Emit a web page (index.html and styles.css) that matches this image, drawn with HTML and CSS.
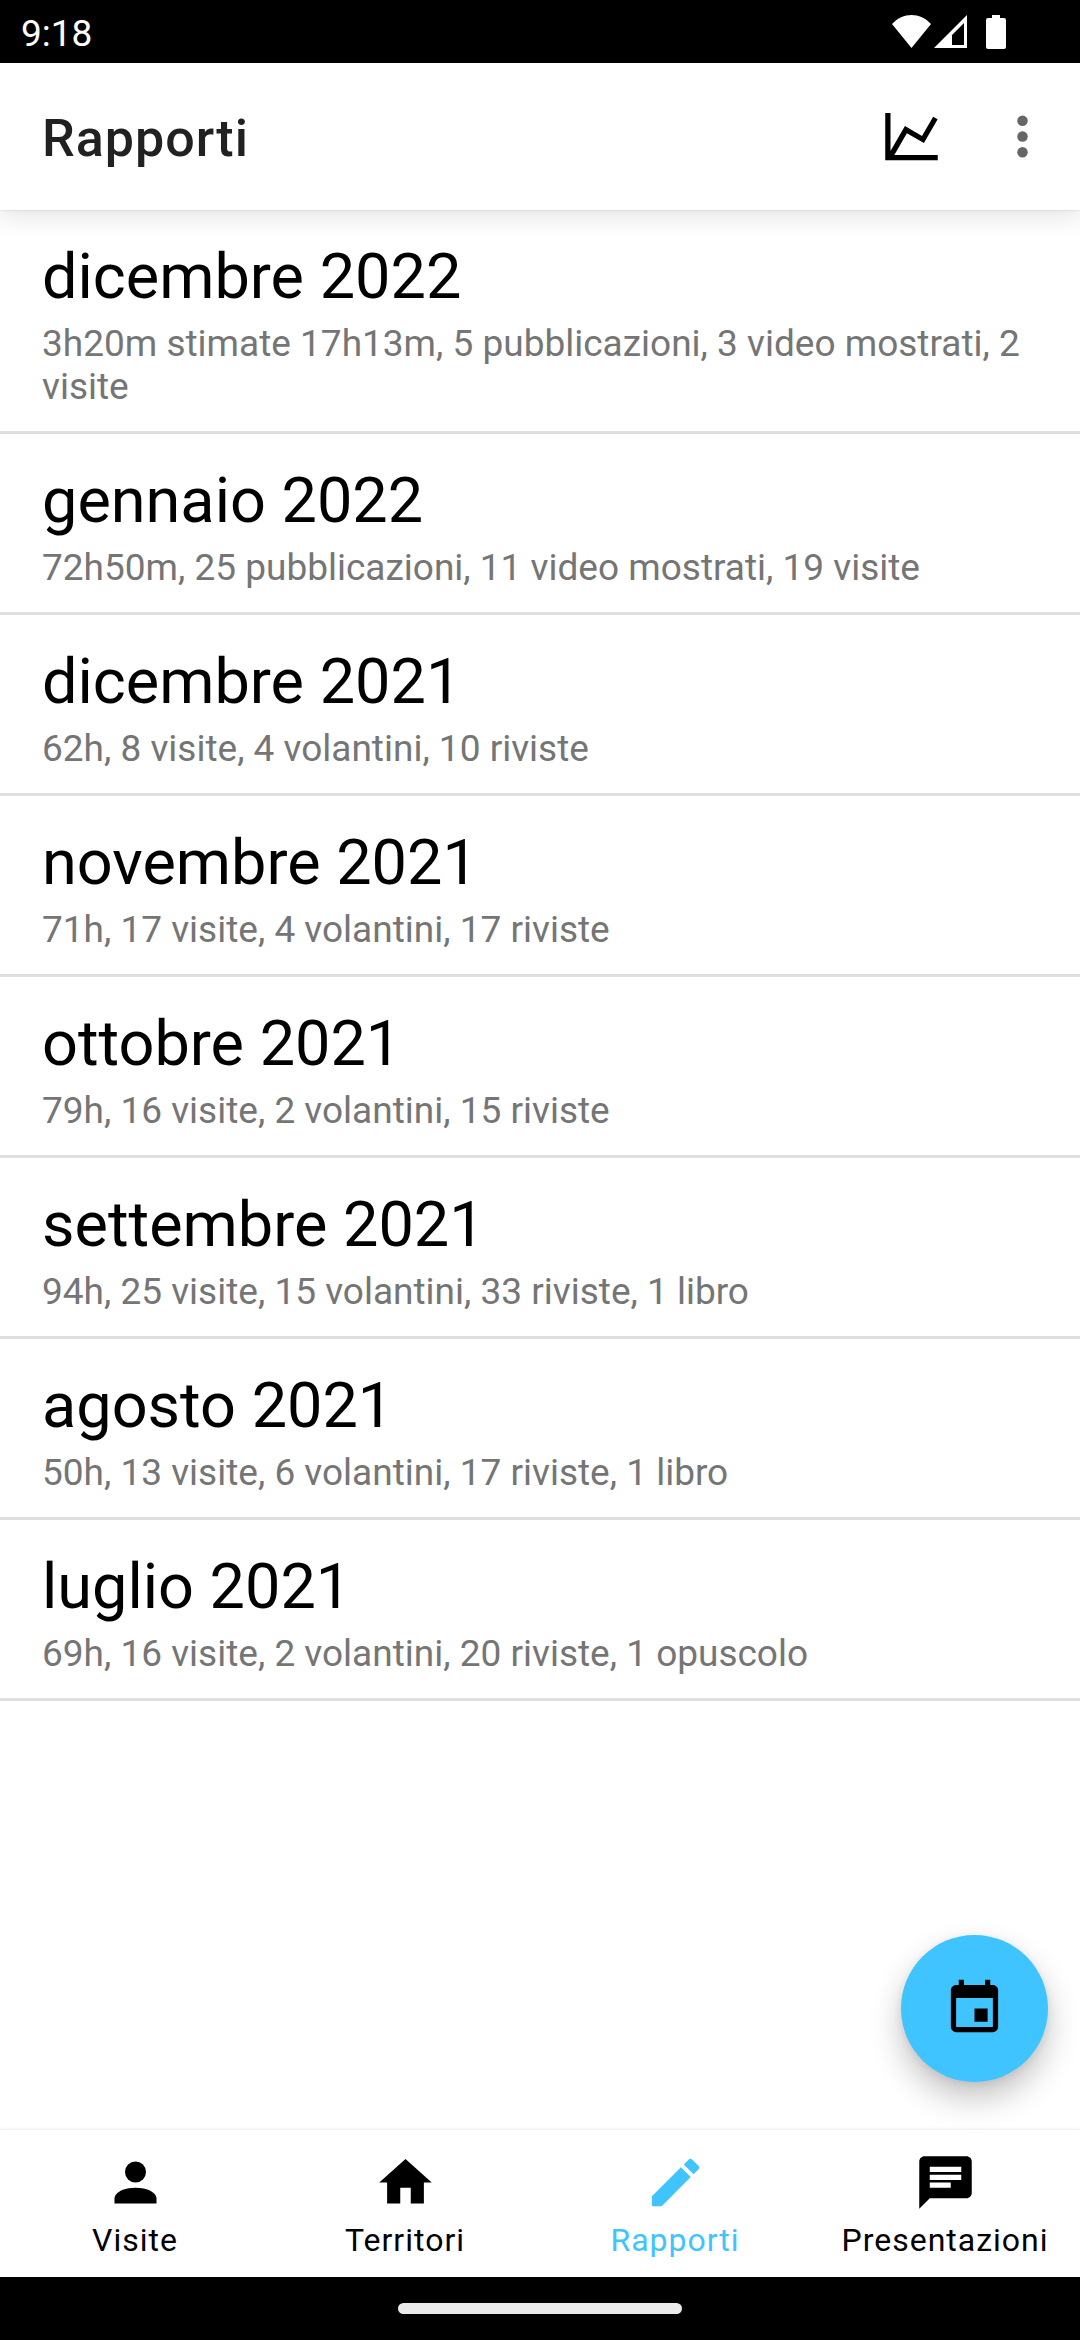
FILE: index.html
```html
<!DOCTYPE html>
<html lang="it">
<head>
<meta charset="utf-8">
<meta name="viewport" content="width=device-width, initial-scale=1">
<title>Rapporti</title>
<link rel="stylesheet" href="styles.css">
</head>
<body class="app">
  <div class="status-bar">
    <span class="status-time">9:18</span>
    <div class="status-icons">
      <svg class="status-wifi" viewBox="0 0 39 33" aria-hidden="true"><path d="M0 9C11-3 28-3 39 9L19.500 33Z"/></svg>
      <svg class="status-signal" viewBox="0 0 33 33" aria-hidden="true"><path fill-rule="evenodd" d="M33 0V33H0ZM30 8L18 20V30H30Z"/></svg>
      <svg class="status-battery" viewBox="0 0 20 34" aria-hidden="true"><path d="M6 0H14V3H18Q20 3 20 5V32Q20 34 18 34H2Q0 34 0 32V5Q0 3 2 3H6Z"/></svg>
    </div>
  </div>

  <header class="toolbar">
    <h1 class="toolbar-title">Rapporti</h1>
    <button class="icon-button" type="button" aria-label="Statistiche">
      <svg class="icon" viewBox="0 0 24 24" aria-hidden="true"><path d="M16 11.780L20.240 4.450L21.970 5.450L16.740 14.500L10.230 10.750L5.460 19H22V21H2V3H4V17.540L9.500 8Z"/></svg>
    </button>
    <button class="icon-button icon-button-muted" type="button" aria-label="Altre opzioni">
      <svg class="icon" viewBox="0 0 24 24" aria-hidden="true"><circle cx="12" cy="6" r="2"/><circle cx="12" cy="12" r="2"/><circle cx="12" cy="18" r="2"/></svg>
    </button>
  </header>

  <main class="content">
    <ul class="reports">
      <li class="report"><h2 class="report-month">dicembre 2022</h2><p class="report-summary">3h20m stimate 17h13m, 5 pubblicazioni, 3 video mostrati, 2 visite</p></li>
      <li class="report"><h2 class="report-month">gennaio 2022</h2><p class="report-summary">72h50m, 25 pubblicazioni, 11 video mostrati, 19 visite</p></li>
      <li class="report"><h2 class="report-month">dicembre 2021</h2><p class="report-summary">62h, 8 visite, 4 volantini, 10 riviste</p></li>
      <li class="report"><h2 class="report-month">novembre 2021</h2><p class="report-summary">71h, 17 visite, 4 volantini, 17 riviste</p></li>
      <li class="report"><h2 class="report-month">ottobre 2021</h2><p class="report-summary">79h, 16 visite, 2 volantini, 15 riviste</p></li>
      <li class="report"><h2 class="report-month">settembre 2021</h2><p class="report-summary">94h, 25 visite, 15 volantini, 33 riviste, 1 libro</p></li>
      <li class="report"><h2 class="report-month">agosto 2021</h2><p class="report-summary">50h, 13 visite, 6 volantini, 17 riviste, 1 libro</p></li>
      <li class="report"><h2 class="report-month">luglio 2021</h2><p class="report-summary">69h, 16 visite, 2 volantini, 20 riviste, 1 opuscolo</p></li>
    </ul>
    <button class="fab" type="button" aria-label="Aggiungi rapporto">
      <svg class="icon" viewBox="0 0 24 24" aria-hidden="true"><path d="M19 19H5V8H19M16 1V3H8V1H6V3H5C3.890 3 3 3.890 3 5V19A2 2 0 0 0 5 21H19A2 2 0 0 0 21 19V5C21 3.890 20.100 3 19 3H18V1M17 12H12V17H17V12Z"/></svg>
    </button>
  </main>

  <nav class="tabs">
    <a class="tab" href="#visite">
      <svg class="icon" viewBox="0 0 24 24" aria-hidden="true"><circle cx="12" cy="8" r="4"/><path d="M12 14C16.420 14 20 15.790 20 18V20H4V18C4 15.790 7.580 14 12 14Z"/></svg>
      <span>Visite</span>
    </a>
    <a class="tab" href="#territori">
      <svg class="icon" viewBox="0 0 24 24" aria-hidden="true"><path d="M10 20v-6h4v6h5v-8h3L12 3 2 12h3v8z"/></svg>
      <span>Territori</span>
    </a>
    <a class="tab tab-active" href="#rapporti" aria-current="page">
      <svg class="icon" viewBox="0 0 24 24" aria-hidden="true"><path d="M3 17.250V21h3.750L17.810 9.940l-3.750-3.750L3 17.250zM20.710 7.040c.39-.39.39-1.020 0-1.410l-2.340-2.340c-.39-.39-1.020-.39-1.410 0l-1.830 1.830 3.750 3.750 1.830-1.830z"/></svg>
      <span>Rapporti</span>
    </a>
    <a class="tab" href="#presentazioni">
      <svg class="icon" viewBox="0 0 24 24" aria-hidden="true"><path d="M20 2H4c-1.100 0-1.990.9-1.990 2L2 22l4-4h14c1.100 0 2-.9 2-2V4c0-1.100-.9-2-2-2zM6 9h12v2H6V9zm8 5H6v-2h8v2zm4-6H6V6h12v2z"/></svg>
      <span>Presentazioni</span>
    </a>
  </nav>
  <div class="gesture-bar"><div class="gesture-pill"></div></div>
</body>
</html>
```
FILE: styles.css
```css
* {
  box-sizing: border-box;
}

.app {
  display: flex;
  flex-direction: column;
  min-height: 100vh;
  margin: 0;
  background: #fff;
  color: #000;
  font-family: Roboto, "Noto Sans", sans-serif;
}

.status-bar {
  display: flex;
  align-items: center;
  justify-content: space-between;
  height: 63px;
  padding: 4px 74px 0 21px;
  background: #000;
  color: #fff;
  font-size: 37px;
  line-height: 43px;
}

.status-icons {
  display: flex;
  align-items: flex-start;
  height: 38px;
  fill: #fff;
}

.status-wifi {
  width: 39px;
  height: 33px;
}

.status-signal {
  width: 33px;
  height: 33px;
  margin: 0 19px 0 3px;
}

.status-battery {
  width: 20px;
  height: 34px;
}

.toolbar {
  position: relative;
  z-index: 1;
  display: flex;
  align-items: center;
  gap: 48px;
  height: 147px;
  padding: 0 26px 0 42px;
  background: #fff;
  box-shadow: 0 0 3px rgba(0, 0, 0, 0.12), 0 8px 24px rgba(0, 0, 0, 0.1);
}

.toolbar-title {
  flex: 1;
  margin: 0;
  padding-top: 4px;
  color: #212121;
  font-size: 52px;
  font-weight: 500;
  letter-spacing: 1px;
  line-height: 62px;
}

.icon-button {
  display: flex;
  padding: 0;
  border: 0;
  background: none;
  color: #000;
}

.icon-button-muted {
  color: #666;
}

.icon {
  width: 63px;
  height: 63px;
  fill: currentColor;
}

.content {
  position: relative;
  flex: 1;
}

.reports {
  margin: 0;
  padding: 0;
  list-style: none;
}

.report {
  display: flex;
  flex-direction: column;
  gap: 8px;
  padding: 30px 42px 23px;
  border-bottom: 3px solid #dfdfdf;
}

.report-month {
  margin: 0;
  font-size: 63px;
  font-weight: 400;
  line-height: 74px;
}

.report-summary {
  margin: 0;
  color: #757575;
  font-size: 37px;
  line-height: 43px;
}

.fab {
  position: absolute;
  right: 32px;
  bottom: 48px;
  display: flex;
  align-items: center;
  justify-content: center;
  width: 147px;
  height: 147px;
  padding: 0;
  border: 0;
  border-radius: 50%;
  background: #40c4ff;
  color: #000;
  box-shadow: 0 16px 32px rgba(0, 0, 0, 0.24), 0 2px 8px rgba(0, 0, 0, 0.08);
}

.tabs {
  position: relative;
  display: grid;
  grid-template-columns: repeat(4, 1fr);
  background: #fff;
  box-shadow: 0 0 4px rgba(0, 0, 0, 0.12);
}

.tab {
  display: flex;
  flex-direction: column;
  align-items: center;
  gap: 8px;
  padding: 21px 0 18px;
  color: #000;
  font-size: 32px;
  letter-spacing: 1px;
  line-height: 37px;
  text-decoration: none;
}

.tab-active {
  color: #40c4ff;
}

.gesture-bar {
  display: flex;
  align-items: center;
  justify-content: center;
  height: 63px;
  background: #000;
}

.gesture-pill {
  width: 284px;
  height: 11px;
  border-radius: 6px;
  background: #ebebeb;
}
```
